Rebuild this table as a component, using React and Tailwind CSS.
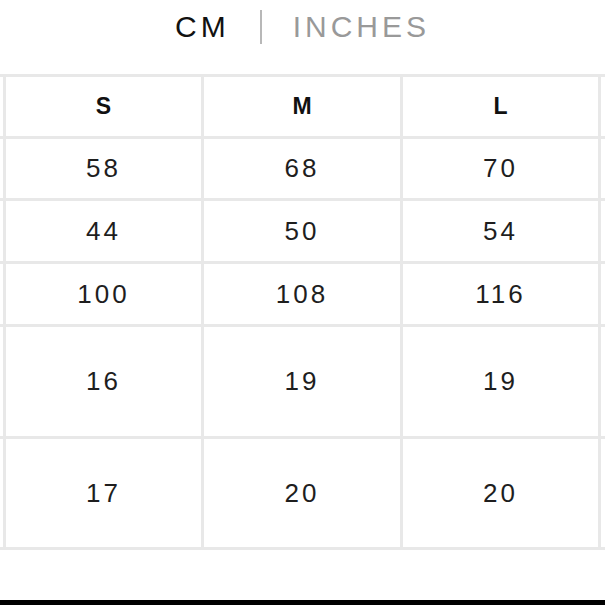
import React from "react";

const rows = [
  { h: "h-[59px]", v: ["S", "M", "L"], head: true },
  { h: "h-[59px]", v: ["58", "68", "70"] },
  { h: "h-[60px]", v: ["44", "50", "54"] },
  { h: "h-[60px]", v: ["100", "108", "116"] },
  { h: "h-[109px]", v: ["16", "19", "19"] },
  { h: "h-[108px]", v: ["17", "20", "20"] },
];

export default function App() {
  return (
    <div
      className="w-[605px] h-[605px] bg-white overflow-hidden flex flex-col"
      style={{ fontFamily: '"Liberation Sans", Arial, sans-serif' }}
    >
      <div className="h-[74px] flex justify-center items-start pt-[10px]">
        <div className="flex items-center h-[34px]">
          <span className="text-[30px] leading-none tracking-[4px] text-[#111]">CM</span>
          <span className="w-[2px] h-[34px] bg-[#b8b8b8] ml-[30px] mr-[31px]" />
          <span className="text-[30px] leading-none tracking-[4px] text-[#999]">INCHES</span>
        </div>
      </div>
      <div className="grid grid-cols-[3px_195px_196px_195px_4px] gap-[3px] bg-[#e8e8e8] py-[3px]">
        {rows.map((r, i) => (
          <React.Fragment key={i}>
            <div className={`bg-white ${r.h}`} />
            {r.v.map((t, j) => (
              <div
                key={j}
                className={`bg-white ${r.h} flex items-center justify-center ${
                  r.head
                    ? "text-[23px] font-bold text-[#111]"
                    : "text-[26px] tracking-[3px] text-[#1e1e1e]"
                }`}
              >
                {t}
              </div>
            ))}
            <div className={`bg-white ${r.h}`} />
          </React.Fragment>
        ))}
      </div>
      <div className="flex-1" />
      <div className="h-[5px] bg-black" />
    </div>
  );
}
